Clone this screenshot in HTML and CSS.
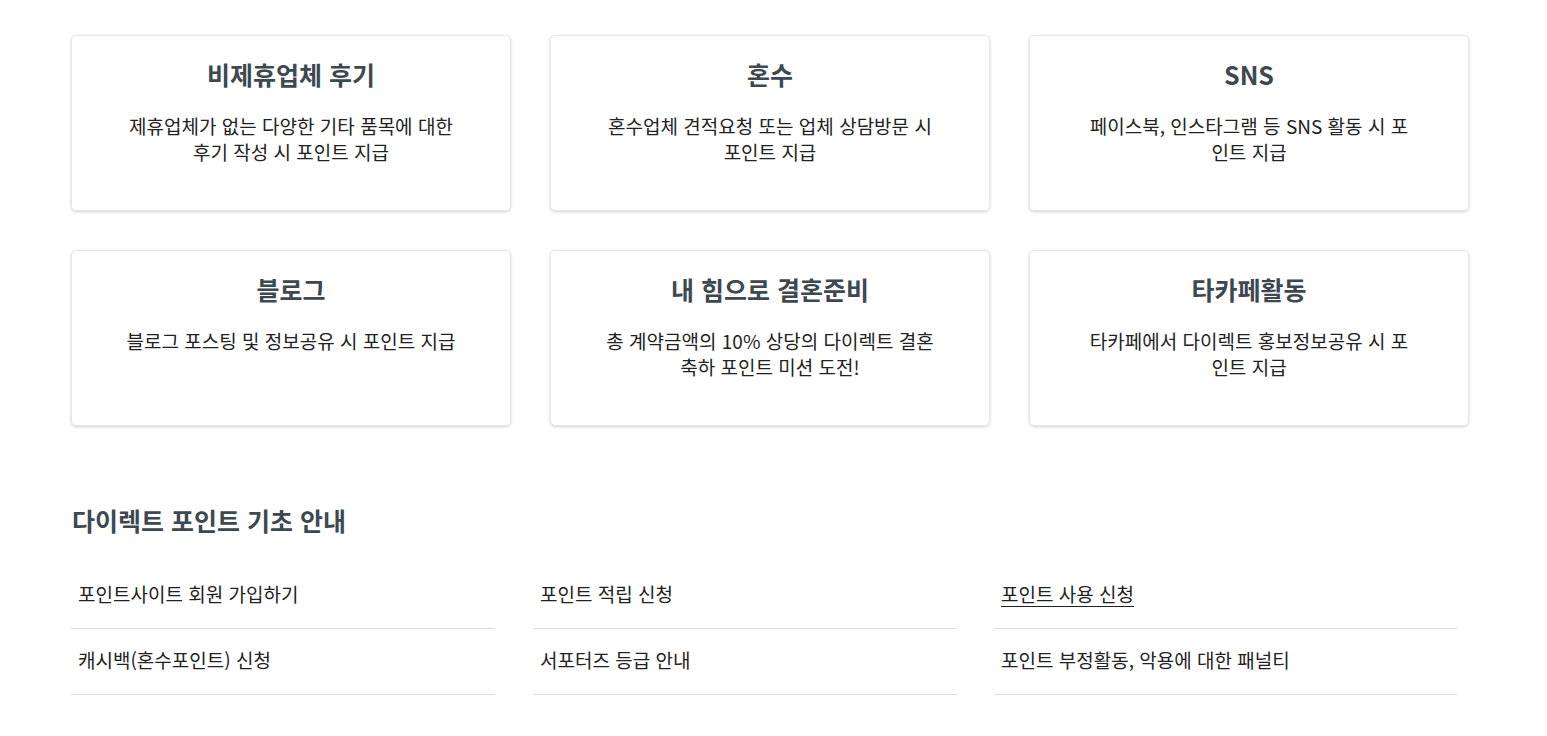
FILE: index.html
```html
<!DOCTYPE html>
<html lang="ko">
<head>
<meta charset="utf-8">
<link rel="stylesheet" href="styles.css">
</head>
<body>
<div class="wrap">
  <div class="cards">
    <div class="card"><h3 class="card-title">비제휴업체 후기</h3><p class="card-desc">제휴업체가 없는 다양한 기타 품목에 대한 후기 작성 시 포인트 지급</p></div>
    <div class="card"><h3 class="card-title">혼수</h3><p class="card-desc">혼수업체 견적요청 또는 업체 상담방문 시 포인트 지급</p></div>
    <div class="card"><h3 class="card-title">SNS</h3><p class="card-desc">페이스북, 인스타그램 등 SNS 활동 시 포인트 지급</p></div>
    <div class="card"><h3 class="card-title">블로그</h3><p class="card-desc">블로그 포스팅 및 정보공유 시 포인트 지급</p></div>
    <div class="card"><h3 class="card-title">내 힘으로 결혼준비</h3><p class="card-desc">총 계약금액의 10% 상당의 다이렉트 결혼 축하 포인트 미션 도전!</p></div>
    <div class="card"><h3 class="card-title">타카페활동</h3><p class="card-desc">타카페에서 다이렉트 홍보정보공유 시 포인트 지급</p></div>
  </div>
  <h2 class="section-title">다이렉트 포인트 기초 안내</h2>
  <ul class="links">
    <li class="link-item"><a href="#">포인트사이트 회원 가입하기</a></li>
    <li class="link-item"><a href="#">포인트 적립 신청</a></li>
    <li class="link-item"><a href="#" class="active">포인트 사용 신청</a></li>
    <li class="link-item"><a href="#">캐시백(혼수포인트) 신청</a></li>
    <li class="link-item"><a href="#">서포터즈 등급 안내</a></li>
    <li class="link-item"><a href="#">포인트 부정활동, 악용에 대한 패널티</a></li>
  </ul>
</div>
</body>
</html>
```
FILE: styles.css
```css
* { box-sizing: border-box; }
html, body { margin: 0; padding: 0; background: #fff; }
body {
  font-family: "Noto Sans CJK KR", "Noto Sans", sans-serif;
  color: #222;
}
.wrap {
  width: 1398px;
  margin-left: 71px;
  padding-top: 35px;
}
.cards {
  display: grid;
  grid-template-columns: repeat(3, 440px);
  column-gap: 39px;
  row-gap: 39px;
}
.card {
  height: 176px;
  border: 1px solid #e6e6e6;
  border-radius: 5px;
  box-shadow: 0 1px 3px rgba(0,0,0,0.18);
  padding: 20px 50px 0;
  text-align: center;
}
.card-title {
  margin: 0;
  font-size: 25px;
  line-height: 36px;
  font-weight: 700;
  color: #3d4850;
}
.card-desc {
  margin: 21px auto 0;
  width: 330px;
  font-size: 19px;
  line-height: 26px;
  color: #222;
  word-break: break-all;
}
.section-title {
  margin: 76px 0 0 1px;
  font-size: 25px;
  line-height: 36px;
  font-weight: 700;
  color: #3d4850;
}
.links {
  list-style: none;
  margin: 25px 0 0;
  padding: 0;
  display: grid;
  grid-template-columns: 424px 424px 462px;
  column-gap: 38px;
}
.link-item {
  height: 66px;
  border-bottom: 1px solid #dcdfe2;
  display: flex;
  align-items: center;
  padding: 0 0 4px 7px;
}
.link-item:nth-child(3n) { margin-left: -1px; }
.link-item a {
  font-size: 19px;
  color: #222;
  text-decoration: none;
}
.link-item a.active { text-decoration: underline; text-underline-offset: 4px; }
```
